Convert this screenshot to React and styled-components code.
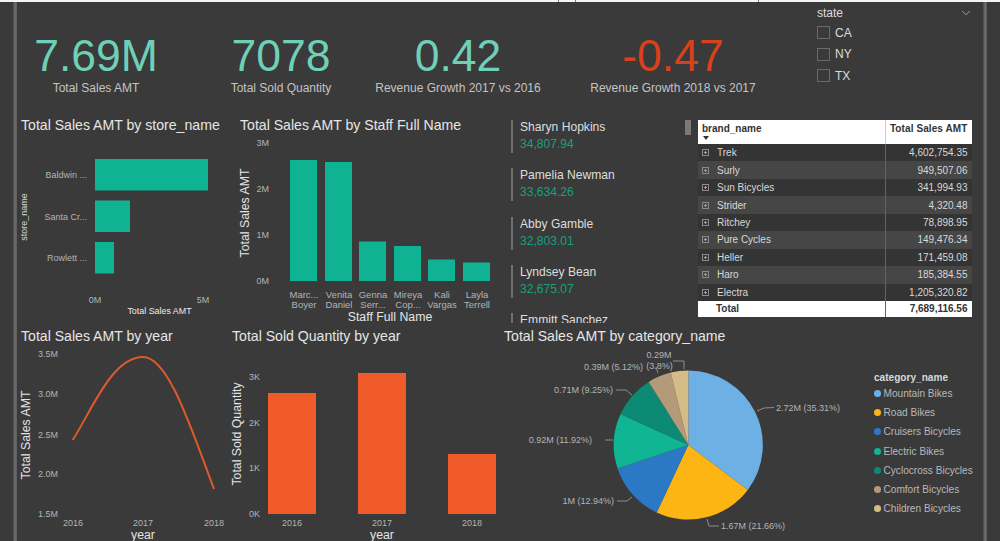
import React from 'react';
import styled, { createGlobalStyle } from 'styled-components';
import { ChevronDown } from 'lucide-react';

const GlobalStyle = createGlobalStyle`
	html, body {
		margin: 0;
		padding: 0;
		background: #3a3a3a;
		font-family: 'Liberation Sans', Arial, sans-serif;
	}
`;

const teal = '#10b294';
const orange = '#f15a29';

const kpis = [
	{ value: '7.69M', label: 'Total Sales AMT', width: 158, gap: 0 },
	{ value: '7078', label: 'Total Sold Quantity', width: 182, gap: 15 },
	{ value: '0.42', label: 'Revenue Growth 2017 vs 2016', width: 172, gap: 0 },
	{ value: '-0.47', label: 'Revenue Growth 2018 vs 2017', width: 184, gap: 37, negative: true },
];

const stores = [
	{ name: 'Baldwin ...', y: 159, width: 113 },
	{ name: 'Santa Cr...', y: 200.5, width: 35 },
	{ name: 'Rowlett ...', y: 242, width: 19 },
];

const staff = [
	{ x: 290, top: 160, lines: ['Marc...', 'Boyer'] },
	{ x: 325, top: 162, lines: ['Venita', 'Daniel'] },
	{ x: 359, top: 241.5, lines: ['Genna', 'Serr...'] },
	{ x: 394, top: 246, lines: ['Mireya', 'Cop...'] },
	{ x: 428, top: 259.5, lines: ['Kali', 'Vargas'] },
	{ x: 463, top: 262.5, lines: ['Layla', 'Terrell'] },
];

const cards = [
	{ name: 'Sharyn Hopkins', value: '34,807.94' },
	{ name: 'Pamelia Newman', value: '33,634.26' },
	{ name: 'Abby Gamble', value: '32,803.01' },
	{ name: 'Lyndsey Bean', value: '32,675.07' },
	{ name: 'Emmitt Sanchez' },
];

const brands = [
	['Trek', '4,602,754.35'],
	['Surly', '949,507.06'],
	['Sun Bicycles', '341,994.93'],
	['Strider', '4,320.48'],
	['Ritchey', '78,898.95'],
	['Pure Cycles', '149,476.34'],
	['Heller', '171,459.08'],
	['Haro', '185,384.55'],
	['Electra', '1,205,320.82'],
];

const categories = [
	{ name: 'Mountain Bikes', share: 35.31, color: '#6cb0e4' },
	{ name: 'Road Bikes', share: 21.66, color: '#fdb515' },
	{ name: 'Cruisers Bicycles', share: 12.94, color: '#2b78c5' },
	{ name: 'Electric Bikes', share: 11.92, color: '#10b594' },
	{ name: 'Cyclocross Bicycles', share: 9.25, color: '#0d8a73' },
	{ name: 'Comfort Bicycles', share: 5.12, color: '#b49a78' },
	{ name: 'Children Bicycles', share: 3.8, color: '#d5bb85' },
];

const pieLabels = [
	{ text: '2.72M (35.31%)', x: 776, y: 407.5, anchor: 'start', line: '757,411 764,408 774,407.5' },
	{ text: '1.67M (21.66%)', x: 721, y: 526, anchor: 'start', line: '707,519 709,526 719,526' },
	{ text: '1M (12.94%)', x: 614, y: 500.5, anchor: 'end', line: '617,501 627,501 632,497' },
	{ text: '0.92M (11.92%)', x: 592, y: 440, anchor: 'end', line: '605,440 613,440' },
	{ text: '0.71M (9.25%)', x: 613, y: 390, anchor: 'end', line: '616,390 626,390 632,395' },
	{ text: '0.39M (5.12%)', x: 643, y: 367, anchor: 'end', line: '656,367 658,373' },
	{ text: '0.29M', x: 659, y: 355, anchor: 'middle' },
	{ text: '(3.8%)', x: 659.5, y: 366, anchor: 'middle', line: '673,361 684,361 684,369' },
];

const slicePath = (cx, cy, r, from, to) => {
	const point = (pct) => {
		const a = (pct / 100) * Math.PI * 2;
		return `${cx + r * Math.sin(a)} ${cy - r * Math.cos(a)}`;
	};
	const large = to - from > 50 ? 1 : 0;
	return `M${cx} ${cy}L${point(from)}A${r} ${r} 0 ${large} 1 ${point(to)}Z`;
};

const Plot = ({ x, y, w, h, children }) => (
	<PlotSvg width={w} height={h} viewBox={`${x} ${y} ${w} ${h}`}>
		{children}
	</PlotSvg>
);

const Pie = () => {
	let start = 0;
	return categories.map((c) => {
		const from = start;
		start += c.share;
		return <path key={c.name} d={slicePath(688.3, 445, 74.5, from, start)} fill={c.color} />;
	});
};

const App = () => {
	return (
		<>
			<GlobalStyle />
			<Page>
				<TopEdge>
					<Tick $left={558} />
					<Tick $left={16} />
					<Tick $left={182} />
				</TopEdge>
				<Body>
					<Gutter />
					<Rail />
					<Main>
						<KpiRow>
							{kpis.map((k) => (
								<Kpi key={k.label} $width={k.width} $gap={k.gap}>
									<KpiValue $negative={k.negative}>{k.value}</KpiValue>
									<KpiLabel>{k.label}</KpiLabel>
								</Kpi>
							))}
							<Slicer>
								<SlicerHead>
									<span>state</span>
									<ChevronDown size={14} strokeWidth={1.2} />
								</SlicerHead>
								{['CA', 'NY', 'TX'].map((s) => (
									<SlicerItem key={s}>
										<CheckBox />
										{s}
									</SlicerItem>
								))}
							</Slicer>
						</KpiRow>

						<MiddleRow>
							<Panel $width={215}>
								<Title $left={4} $height={26}>Total Sales AMT by store_name</Title>
								<Plot x={17} y={138} w={215} h={187}>
									{stores.map((s) => (
										<g key={s.name}>
											<rect x={95} y={s.y} width={s.width} height={31.5} fill={teal} />
											<Axis x={87} y={s.y + 16} textAnchor="end" $size={9}>{s.name}</Axis>
										</g>
									))}
									<Axis x={95} y={300} textAnchor="middle" $size={9}>0M</Axis>
									<Axis x={203} y={300} textAnchor="middle" $size={9}>5M</Axis>
									<Axis x={159.5} y={311} textAnchor="middle" $size={8.9} $fill="#ececec">Total Sales AMT</Axis>
									<Axis x={24} y={217} textAnchor="middle" $size={9} $fill="#d8d8d8" transform="rotate(-90 24 217)">store_name</Axis>
								</Plot>
							</Panel>

							<Panel $width={268}>
								<Title $left={8} $height={26}>Total Sales AMT by Staff Full Name</Title>
								<Plot x={232} y={138} w={268} h={187}>
									{[['3M', 143], ['2M', 189], ['1M', 235], ['0M', 281]].map(([t, y]) => (
										<Axis key={t} x={269} y={y} textAnchor="end" $size={9}>{t}</Axis>
									))}
									{staff.map((s) => (
										<g key={s.x}>
											<rect x={s.x} y={s.top} width={27} height={281 - s.top} fill={teal} />
											<Axis x={s.x + 14} y={294} textAnchor="middle" $size={9.5}>{s.lines[0]}</Axis>
											<Axis x={s.x + 14} y={304.5} textAnchor="middle" $size={9.5}>{s.lines[1]}</Axis>
										</g>
									))}
									<Axis x={390} y={317} textAnchor="middle" $size={12.3} $fill="#e4e4e4">Staff Full Name</Axis>
									<Axis x={245} y={213} textAnchor="middle" $size={12.3} $fill="#e4e4e4" transform="rotate(-90 245 213)">Total Sales AMT</Axis>
								</Plot>
							</Panel>

							<CardList>
								{cards.map((c) => (
									<Card key={c.name}>
										<CardName>{c.name}</CardName>
										{c.value && <CardValue>{c.value}</CardValue>}
									</Card>
								))}
							</CardList>
							<ScrollThumb />

							<BrandTable>
								<HeadRow>
									<NameCell $head>
										brand_name
										<SortArrow />
									</NameCell>
									<ValueCell $head>Total Sales AMT</ValueCell>
								</HeadRow>
								{brands.map(([name, value], i) => (
									<BrandRow key={name} $even={i % 2 === 1}>
										<NameCell>
											<Expand />
											{name}
										</NameCell>
										<ValueCell>{value}</ValueCell>
									</BrandRow>
								))}
								<TotalRow>
									<NameCell $total>Total</NameCell>
									<ValueCell>7,689,116.56</ValueCell>
								</TotalRow>
							</BrandTable>
						</MiddleRow>

						<BottomRow>
							<Panel $width={208}>
								<Title $left={4} $height={22}>Total Sales AMT by year</Title>
								<Plot x={17} y={347} w={208} h={194}>
									{[['3.5M', 354], ['3.0M', 394], ['2.5M', 434.5], ['2.0M', 474], ['1.5M', 514]].map(([t, y]) => (
										<Axis key={t} x={58} y={y} textAnchor="end" $size={9}>{t}</Axis>
									))}
									<path d="M72.7 440C92 410 112 357 143 357C168 357 190 425 214 489" fill="none" stroke="#dc5a2c" strokeWidth="2" />
									{[['2016', 73], ['2017', 143], ['2018', 214]].map(([t, x]) => (
										<Axis key={t} x={x} y={523} textAnchor="middle" $size={9}>{t}</Axis>
									))}
									<Axis x={143} y={535} textAnchor="middle" $size={12.3} $fill="#e4e4e4">year</Axis>
									<Axis x={26} y={435} textAnchor="middle" $size={12.3} $fill="#e4e4e4" transform="rotate(-90 26 435)">Total Sales AMT</Axis>
								</Plot>
							</Panel>

							<Panel $width={275}>
								<Title $left={7} $height={22}>Total Sold Quantity by year</Title>
								<Plot x={225} y={347} w={275} h={194}>
									{[['3K', 377], ['2K', 423], ['1K', 468], ['0K', 514]].map(([t, y]) => (
										<Axis key={t} x={260} y={y} textAnchor="end" $size={9}>{t}</Axis>
									))}
									{[[268, 393, '2016'], [358, 373, '2017'], [448, 454, '2018']].map(([x, top, t]) => (
										<g key={t}>
											<rect x={x} y={top} width={48} height={514 - top} fill={orange} />
											<Axis x={x + 24} y={523} textAnchor="middle" $size={9}>{t}</Axis>
										</g>
									))}
									<Axis x={382} y={535} textAnchor="middle" $size={12.3} $fill="#e4e4e4">year</Axis>
									<Axis x={237} y={434} textAnchor="middle" $size={12.3} $fill="#e4e4e4" transform="rotate(-90 237 434)">Total Sold Quantity</Axis>
								</Plot>
							</Panel>

							<PiePanel>
								<Title $left={4} $height={22}>Total Sales AMT by category_name</Title>
								<PieBody>
									<Plot x={500} y={347} w={364} h={194}>
										<Pie />
										{pieLabels.map((l) => (
											<g key={l.text}>
												{l.line && <polyline points={l.line} fill="none" stroke="#8e8e8e" strokeWidth="1" />}
												<Axis x={l.x} y={l.y} textAnchor={l.anchor} $size={9}>{l.text}</Axis>
											</g>
										))}
									</Plot>
									<Legend>
										<LegendTitle>category_name</LegendTitle>
										{categories.map((c) => (
											<LegendItem key={c.name}>
												<Dot $color={c.color} />
												{c.name}
											</LegendItem>
										))}
									</Legend>
								</PieBody>
							</PiePanel>
						</BottomRow>
					</Main>
					<Rail />
					<Gutter />
				</Body>
			</Page>
		</>
	);
};

const Page = styled.div`
	width: 1000px;
	height: 541px;
	overflow: hidden;
	display: flex;
	flex-direction: column;
	background: #3a3a3a;
`;

const TopEdge = styled.div`
	height: 2px;
	flex: none;
	display: flex;
	background: #f4f4f4;
`;

const Tick = styled.span`
	width: 1px;
	height: 2px;
	margin-left: ${(p) => p.$left}px;
	background: #777;
`;

const Body = styled.div`
	flex: 1;
	display: flex;
	min-height: 0;
`;

const Gutter = styled.div`
	flex: 1;
	background: #393939;
`;

const Rail = styled.div`
	width: 4px;
	flex: none;
	background: linear-gradient(90deg, #4a4a4a, #6e6e6e 50%, #5c5c5c);
`;

const Main = styled.main`
	width: 966px;
	flex: none;
	display: flex;
	flex-direction: column;
`;

const KpiRow = styled.section`
	height: 110px;
	flex: none;
	display: flex;
	align-items: flex-start;
`;

const Kpi = styled.div`
	width: ${(p) => p.$width}px;
	margin-left: ${(p) => p.$gap}px;
	padding-top: 29px;
	text-align: center;
	white-space: nowrap;
`;

const KpiValue = styled.div`
	font-size: 44.5px;
	line-height: 50px;
	color: ${(p) => (p.$negative ? '#d9401c' : '#6fd0b8')};
`;

const KpiLabel = styled.div`
	font-size: 12px;
	line-height: 14px;
	color: #c4c4c4;
`;

const Slicer = styled.div`
	width: 156px;
	margin-left: 52px;
	padding-top: 4px;
	font-size: 12px;
	color: #dcdcdc;
`;

const SlicerHead = styled.div`
	display: flex;
	justify-content: space-between;
	align-items: center;
	height: 14px;
	margin-bottom: 2px;
	svg {
		color: #cfcfcf;
	}
`;

const SlicerItem = styled.div`
	display: flex;
	align-items: center;
	gap: 5px;
	height: 21.5px;
`;

const CheckBox = styled.span`
	width: 11px;
	height: 11px;
	border: 1px solid #6a6a6a;
`;

const MiddleRow = styled.section`
	height: 213px;
	flex: none;
	display: flex;
`;

const BottomRow = styled.section`
	height: 216px;
	flex: none;
	display: flex;
`;

const Panel = styled.div`
	width: ${(p) => p.$width}px;
	flex: none;
`;

const Title = styled.h2`
	margin: 0;
	padding-left: ${(p) => p.$left}px;
	height: ${(p) => p.$height}px;
	line-height: ${(p) => p.$height}px;
	font-size: 14.1px;
	font-weight: normal;
	color: #e6e6e6;
	white-space: nowrap;
`;

const PlotSvg = styled.svg`
	display: block;
	flex: none;
`;

const Axis = styled.text`
	font-family: 'Liberation Sans', Arial, sans-serif;
	font-size: ${(p) => p.$size}px;
	fill: ${(p) => p.$fill || '#b4b4b4'};
	dominant-baseline: central;
`;

const CardList = styled.div`
	width: 174px;
	height: 203px;
	margin: 8px 0 0 11px;
	flex: none;
	overflow: hidden;
	display: flex;
	flex-direction: column;
	gap: 15.3px;
`;

const Card = styled.div`
	flex: none;
	height: 33px;
	padding-left: 7px;
	border-left: 2px solid #6f6f6f;
`;

const CardName = styled.div`
	font-size: 12.1px;
	line-height: 15px;
	color: #dedede;
`;

const CardValue = styled.div`
	font-size: 12.1px;
	line-height: 18px;
	color: #18a07f;
`;

const ScrollThumb = styled.div`
	width: 6px;
	height: 15px;
	margin-top: 8px;
	flex: none;
	background: #7a7a7a;
`;

const BrandTable = styled.div`
	width: 274px;
	margin: 8px 0 0 7px;
	flex: none;
	font-size: 10px;
	color: #d8d8d8;
`;

const HeadRow = styled.div`
	height: 24px;
	display: flex;
	background: #fff;
	color: #333;
	font-weight: bold;
`;

const BrandRow = styled.div`
	height: 17.44px;
	display: flex;
	align-items: center;
	background: ${(p) => (p.$even ? '#464646' : '#343434')};
`;

const TotalRow = styled.div`
	height: 16px;
	display: flex;
	align-items: center;
	background: #fff;
	color: #333;
	font-weight: bold;
`;

const NameCell = styled.div`
	width: 188px;
	height: 100%;
	flex: none;
	box-sizing: border-box;
	display: flex;
	align-items: ${(p) => (p.$head ? 'flex-start' : 'center')};
	flex-direction: ${(p) => (p.$head ? 'column' : 'row')};
	padding: ${(p) => (p.$head ? '2px 0 0 4px' : p.$total ? '0 0 0 18px' : '0 0 0 4px')};
	border-right: 1px solid ${(p) => (p.$head ? '#bcd0de' : '#3b6e93')};
	line-height: 13px;
`;

const ValueCell = styled.div`
	flex: 1;
	padding: ${(p) => (p.$head ? '2px' : '0')} 4.5px 0 0;
	text-align: right;
	white-space: nowrap;
	line-height: 13px;
	letter-spacing: ${(p) => (p.$head ? '0.1px' : '0')};
`;

const SortArrow = styled.span`
	width: 0;
	height: 0;
	margin: 1px 0 0 1px;
	border-left: 3px solid transparent;
	border-right: 3px solid transparent;
	border-top: 4px solid #333;
`;

const Expand = styled.span`
	position: relative;
	width: 5px;
	height: 5px;
	margin-right: 8px;
	flex: none;
	border: 1px solid #8a8a8a;
	&::before {
		content: '';
		position: absolute;
		left: 1px;
		right: 1px;
		top: 2px;
		height: 1px;
		background: #a0a0a0;
	}
	&::after {
		content: '';
		position: absolute;
		top: 1px;
		bottom: 1px;
		left: 2px;
		width: 1px;
		background: #a0a0a0;
	}
`;

const PiePanel = styled.div`
	flex: 1;
	min-width: 0;
`;

const PieBody = styled.div`
	display: flex;
`;

const Legend = styled.div`
	margin: 25px 0 0 10px;
	font-size: 10.1px;
	color: #b8b8b8;
`;

const LegendTitle = styled.div`
	height: 12px;
	line-height: 12px;
	font-weight: bold;
	color: #d8d8d8;
`;

const LegendItem = styled.div`
	height: 19.2px;
	display: flex;
	align-items: center;
	gap: 2.5px;
	white-space: nowrap;
`;

const Dot = styled.span`
	width: 7px;
	height: 7px;
	border-radius: 50%;
	background: ${(p) => p.$color};
	flex: none;
`;

export default App;
